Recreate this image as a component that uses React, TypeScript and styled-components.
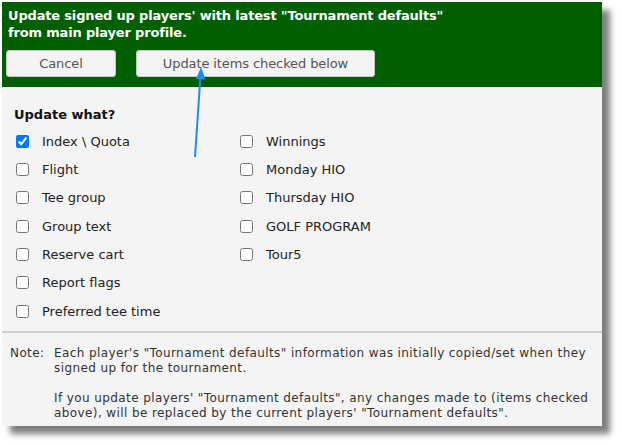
import React from "react";
import styled, { createGlobalStyle } from "styled-components";

const Global = createGlobalStyle`
  html, body { margin: 0; padding: 0; background: #ffffff; }
  body { font-family: "DejaVu Sans", Verdana, sans-serif; }
`;

const Page = styled.div`
  position: relative;
  width: 622px;
  height: 445px;
  padding: 2px 0 0 2px;
  box-sizing: border-box;
`;

const Dialog = styled.div`
  width: 600px;
  background: #f4f4f4;
  box-shadow: 8px 8px 6px rgba(0, 0, 0, 0.5);
`;

const Header = styled.div`
  background: #006000;
  padding: 5px 4px 10px 4px;
  display: flex;
  flex-direction: column;
  gap: 9px;
`;

const Title = styled.div`
  color: #ffffff;
  font-weight: bold;
  font-size: 13px;
  letter-spacing: -0.17px;
  line-height: 17px;
  padding-left: 2px;
`;

const ButtonRow = styled.div`
  display: flex;
  gap: 20px;
`;

const Button = styled.button<{ $w: number }>`
  width: ${(p) => p.$w}px;
  height: 27px;
  background: #f3f3f3;
  border: 1px solid #c8c8c8;
  border-radius: 3px;
  color: #555555;
  font-family: "DejaVu Sans", Verdana, sans-serif;
  font-size: 13px;
  letter-spacing: -0.1px;
  padding: 0;
`;

const Body = styled.div`
  padding: 20px 0 6px 12px;
`;

const SectionLabel = styled.div`
  font-weight: bold;
  font-size: 13px;
  line-height: 16px;
  color: #111;
  margin-bottom: 4px;
`;

const Columns = styled.div`
  display: grid;
  grid-template-columns: 224px 1fr;
  align-items: start;
`;

const Column = styled.div`
  display: flex;
  flex-direction: column;
`;

const Item = styled.label`
  display: flex;
  align-items: center;
  height: 28.33px;
  font-size: 13px;
  color: #222;
`;

const Box = styled.input`
  width: 13px;
  height: 13px;
  margin: 0 13px 0 2px;
  accent-color: #0075ff;
`;

const Note = styled.div`
  border-top: 2px solid #cfcfcf;
  padding: 13px 4px 5px 8px;
  display: grid;
  grid-template-columns: 44px 1fr;
  font-size: 12px;
  letter-spacing: 0.4px;
  line-height: 15px;
  color: #333;
`;

const NoteText = styled.div`
  display: flex;
  flex-direction: column;
  gap: 15px;
`;

const Arrow = styled.svg`
  position: absolute;
  left: 185px;
  top: 60px;
  overflow: visible;
`;

const left = ["Index \\ Quota", "Flight", "Tee group", "Group text", "Reserve cart", "Report flags", "Preferred tee time"];
const right = ["Winnings", "Monday HIO", "Thursday HIO", "GOLF PROGRAM", "Tour5"];

export default function App() {
  return (
    <>
      <Global />
      <Page>
        <Dialog>
          <Header>
            <Title>
              Update signed up players' with latest "Tournament defaults"
              <br />
              from main player profile.
            </Title>
            <ButtonRow>
              <Button $w={110}>Cancel</Button>
              <Button $w={239}>Update items checked below</Button>
            </ButtonRow>
          </Header>
          <Body>
            <SectionLabel>Update what?</SectionLabel>
            <Columns>
              <Column>
                {left.map((t, i) => (
                  <Item key={t}>
                    <Box type="checkbox" defaultChecked={i === 0} />
                    {t}
                  </Item>
                ))}
              </Column>
              <Column>
                {right.map((t) => (
                  <Item key={t}>
                    <Box type="checkbox" />
                    {t}
                  </Item>
                ))}
              </Column>
            </Columns>
          </Body>
          <Note>
            <div>Note:</div>
            <NoteText>
              <div>
                Each player's "Tournament defaults" information was initially copied/set when they signed up for the tournament.
              </div>
              <div>
                If you update players' "Tournament defaults", any changes made to (items checked above), will be replaced by the current players' "Tournament defaults".
              </div>
            </NoteText>
          </Note>
        </Dialog>
        <Arrow width="30" height="110" viewBox="0 0 30 110">
          <line x1="10" y1="97" x2="15.6" y2="14" stroke="#1a8cff" strokeWidth="2" />
          <polygon points="16,7 11,19 20.5,19.6" fill="#1a8cff" />
        </Arrow>
      </Page>
    </>
  );
}
